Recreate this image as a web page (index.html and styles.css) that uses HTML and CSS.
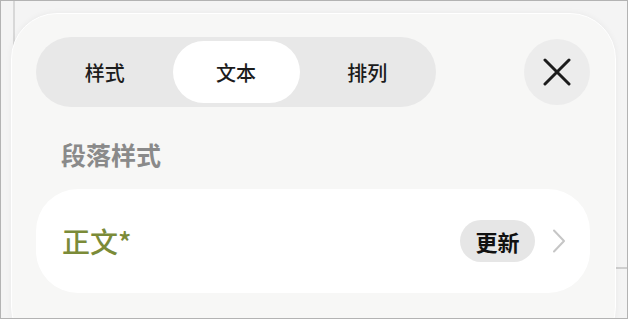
FILE: index.html
```html
<!DOCTYPE html>
<html lang="zh">
<head>
<meta charset="utf-8">
<link rel="stylesheet" href="styles.css">
</head>
<body>
<div class="frame">
  <div class="panel">
    <div class="toolbar">
      <div class="segmented">
        <div class="seg">样式</div>
        <div class="seg active">文本</div>
        <div class="seg">排列</div>
      </div>
      <div class="close">
        <svg width="28" height="28" viewBox="0 0 28 28"><path d="M2 2 L26 26 M26 2 L2 26" stroke="#1c1c1c" stroke-width="3" stroke-linecap="round" fill="none"/></svg>
      </div>
    </div>
    <div class="section-title">段落样式</div>
    <div class="card">
      <div class="style-name">正文*</div>
      <div class="update">更新</div>
      <svg class="chevron" width="14" height="24" viewBox="0 0 14 24"><path d="M2 1.5 L12 12 L2 22.5" stroke="#c6c6c6" stroke-width="2" stroke-linecap="round" stroke-linejoin="round" fill="none"/></svg>
    </div>
  </div>
</div>
</body>
</html>
```
FILE: styles.css
```css
html, body {
  margin: 0;
  padding: 0;
  background: #f3f3f3;
}
body {
  font-family: "Noto Sans CJK SC", "Noto Sans", sans-serif;
}
.frame {
  box-sizing: border-box;
  width: 628px;
  height: 319px;
  border: 1px solid #b3b3b3;
  overflow: hidden;
  background:
    linear-gradient(#d8d8d8, #d8d8d8) 12px 0 / 2px 100% no-repeat,
    linear-gradient(#cfcfcf, #cfcfcf) 614px 266px / 20px 2px no-repeat,
    #f4f4f4;
  padding: 12px 0 0 10px;
}
.panel {
  box-sizing: border-box;
  width: 605px;
  height: 340px;
  background: #f7f7f6;
  border: 1px solid #ffffff;
  border-radius: 46px;
  box-shadow: 0 0 6px rgba(0,0,0,0.05);
  padding: 23px 25px 0 24px;
}
.toolbar {
  display: flex;
  align-items: center;
  justify-content: space-between;
}
.segmented {
  box-sizing: border-box;
  width: 400px;
  height: 70px;
  background: #e8e8e8;
  border-radius: 35px;
  padding: 4px;
  display: flex;
}
.seg {
  flex: 1;
  display: flex;
  align-items: center;
  justify-content: center;
  border-radius: 31px;
  font-size: 20px;
  font-weight: 500;
  color: #1c1c1c;
}
.seg.active {
  background: #ffffff;
  flex: 0 0 127px;
  margin: 0 3px;
}
.close {
  width: 66px;
  height: 66px;
  border-radius: 50%;
  background: #ececec;
  display: flex;
  align-items: center;
  justify-content: center;
}
.section-title {
  margin: 29px 0 0 25px;
  font-size: 25px;
  line-height: 37px;
  font-weight: 600;
  color: #8a8a8a;
}
.card {
  box-sizing: border-box;
  margin-top: 16px;
  height: 104px;
  background: #ffffff;
  border-radius: 42px;
  display: flex;
  align-items: center;
  padding: 0 24px 0 26px;
}
.style-name {
  flex: 1;
  font-size: 28px;
  font-weight: 500;
  color: #7b8b38;
}
.update {
  box-sizing: border-box;
  height: 42px;
  width: 75px;
  border-radius: 21px;
  background: #e6e6e6;
  display: flex;
  align-items: center;
  justify-content: center;
  font-size: 22px;
  font-weight: 600;
  color: #111111;
}
.chevron {
  margin-left: 17px;
}
```
